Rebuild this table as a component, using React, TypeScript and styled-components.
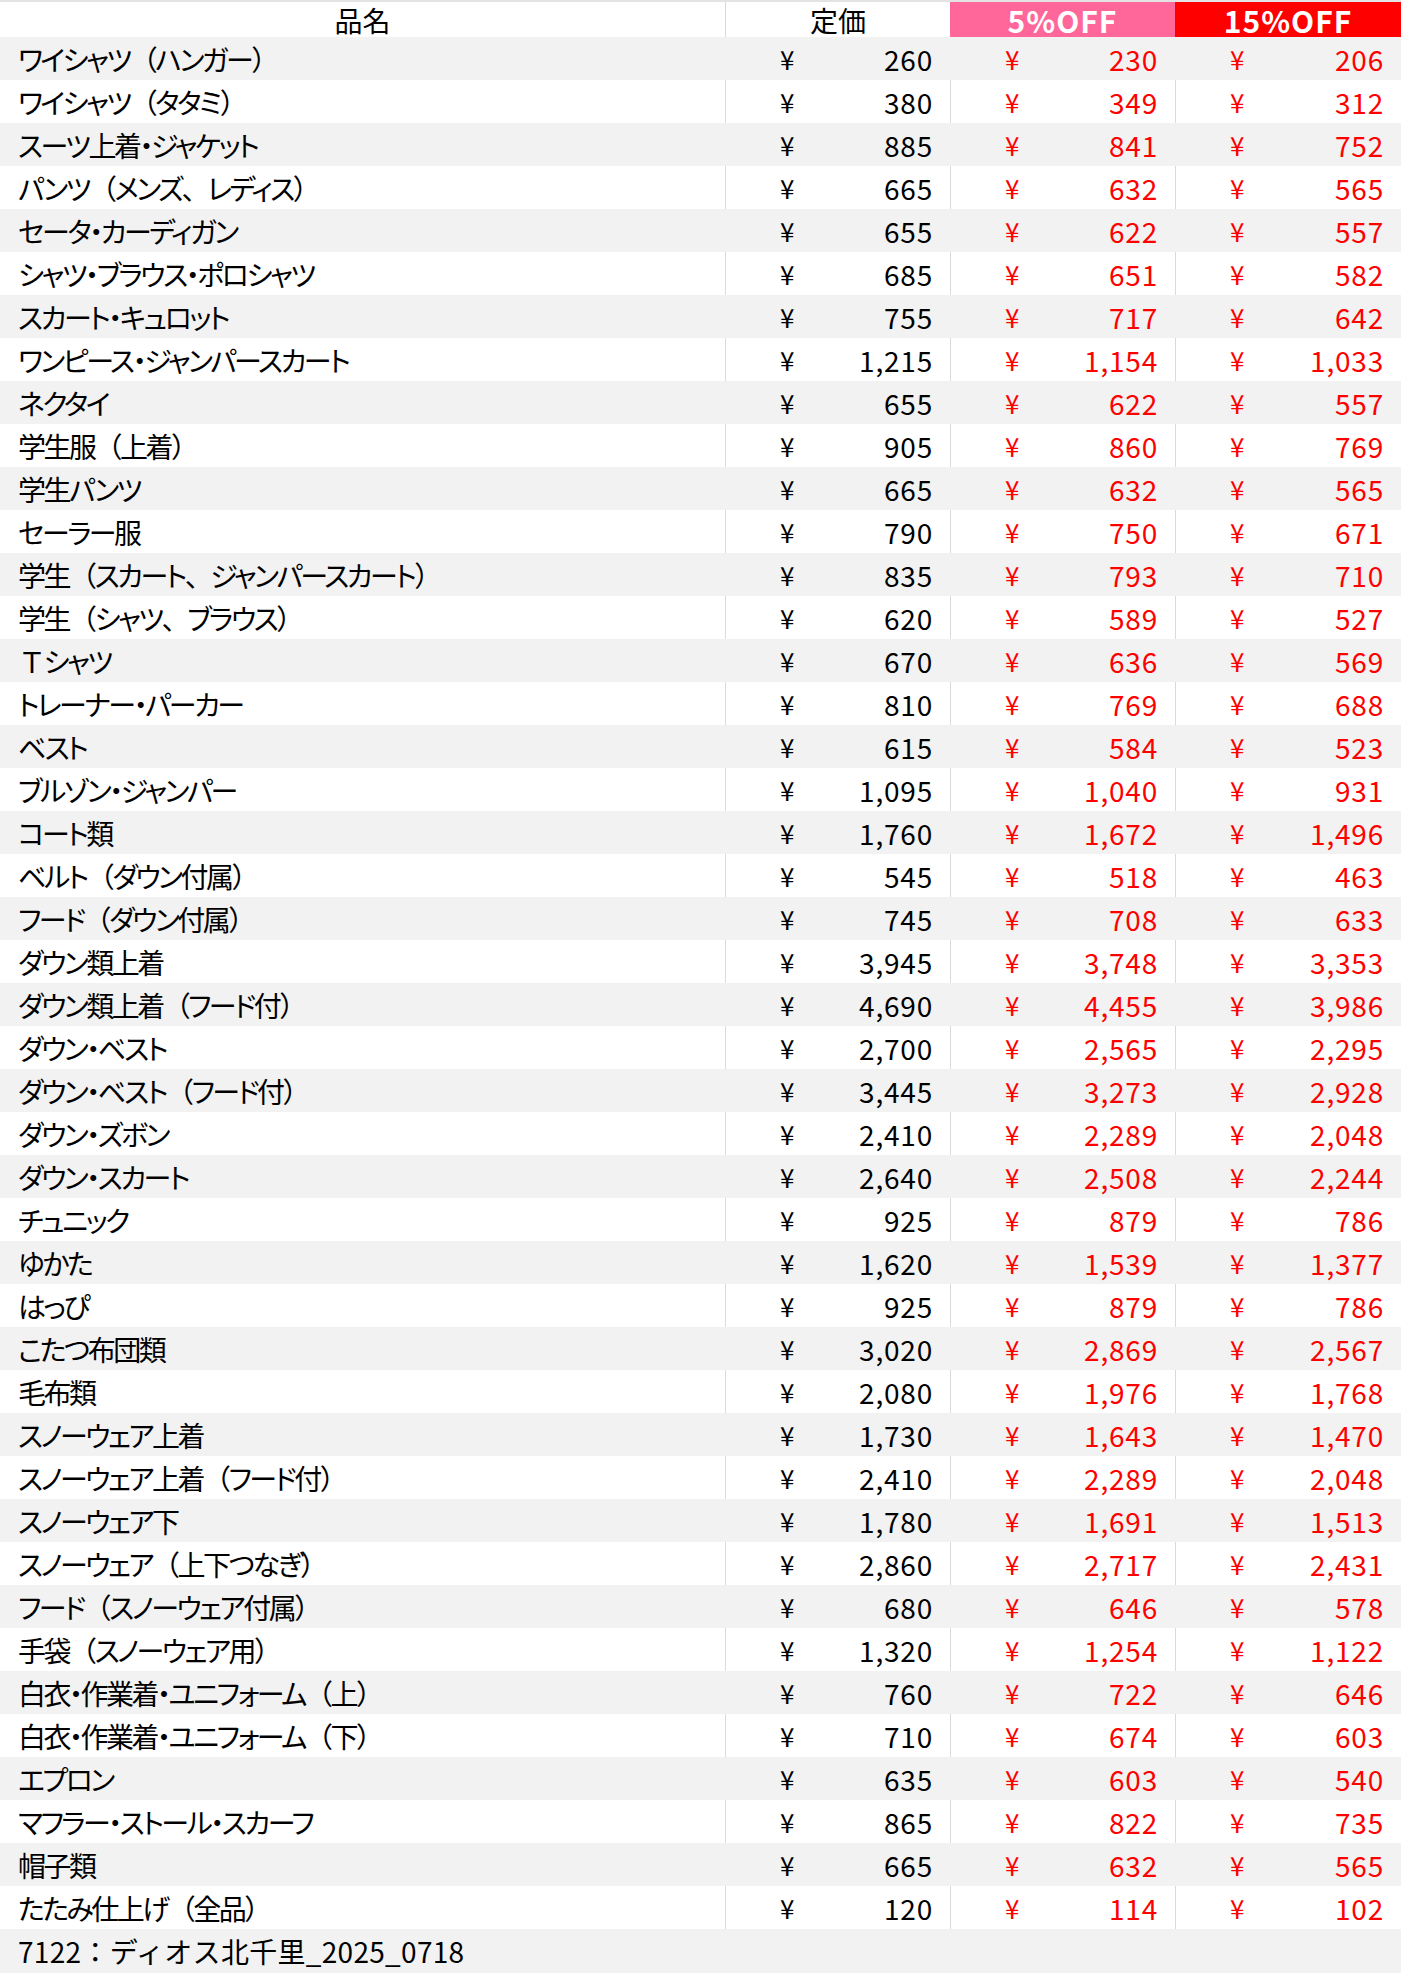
import styled, { createGlobalStyle } from 'styled-components';

const GlobalStyle = createGlobalStyle`
  html, body {
    margin: 0;
    padding: 0;
    background: #ffffff;
  }
  body {
    font-family: 'Noto Sans CJK JP', 'Noto Sans', sans-serif;
    color: #000000;
  }
`;

const COLUMNS = '725px 225px 225px 226px';

const Sheet = styled.div`
  width: 1401px;
  border-top: 2px solid #e3e3e3;
  box-sizing: border-box;
`;

const HeaderRow = styled.div`
  display: grid;
  grid-template-columns: ${COLUMNS};
  height: 35px;
  background: #ffffff;
`;

const HeaderCell = styled.div<{ $fill?: string; $divider?: boolean }>`
  display: flex;
  align-items: center;
  justify-content: center;
  font-size: ${(p) => (p.$fill ? '30px' : '28px')};
  letter-spacing: ${(p) => (p.$fill ? '1px' : '0')};
  line-height: 1;
  background: ${(p) => p.$fill || 'transparent'};
  color: ${(p) => (p.$fill ? '#ffffff' : '#000000')};
  font-weight: ${(p) => (p.$fill ? 700 : 400)};
  border-left: ${(p) => (p.$divider ? '1px solid #d9d9d9' : 'none')};
  box-sizing: border-box;
`;

const Row = styled.div<{ $striped: boolean }>`
  display: grid;
  grid-template-columns: ${COLUMNS};
  height: 43px;
  background: ${(p) => (p.$striped ? '#f2f2f2' : '#ffffff')};
  --grid-line: ${(p) => (p.$striped ? '#f2f2f2' : '#dadada')};
`;

const NameCell = styled.div`
  display: flex;
  align-items: center;
  padding-left: 18px;
  font-size: 28px;
  line-height: 1;
  font-feature-settings: 'palt';
  letter-spacing: -2.5px;
  white-space: pre;
`;

const FullWidth = styled.span`
  font-feature-settings: normal;
`;

const PriceCell = styled.div<{ $red?: boolean }>`
  display: flex;
  align-items: center;
  justify-content: space-between;
  padding: 0 17px 0 54px;
  font-size: 28px;
  line-height: 1;
  color: ${(p) => (p.$red ? '#ff0000' : '#000000')};
  border-left: 1px solid var(--grid-line);
  box-sizing: border-box;
`;

const Yen = styled.span`
  font-size: 26px;
`;

const Amount = styled.span`
  letter-spacing: 0.8px;
`;

const Footer = styled.div`
  display: flex;
  align-items: center;
  height: 44px;
  padding-left: 18px;
  background: #f2f2f2;
  font-size: 28px;
  line-height: 1;
  letter-spacing: 0.3px;
`;

// 品名, 定価, 5%OFF, 15%OFF
const items: [string, number, number, number][] = [
  ['ワイシャツ（ハンガー）', 260, 230, 206],
  ['ワイシャツ（タタミ）', 380, 349, 312],
  ['スーツ上着・ジャケット', 885, 841, 752],
  ['パンツ（メンズ、レディス）', 665, 632, 565],
  ['セータ・カーディガン', 655, 622, 557],
  ['シャツ・ブラウス・ポロシャツ', 685, 651, 582],
  ['スカート・キュロット', 755, 717, 642],
  ['ワンピース・ジャンパースカート', 1215, 1154, 1033],
  ['ネクタイ', 655, 622, 557],
  ['学生服（上着）', 905, 860, 769],
  ['学生パンツ', 665, 632, 565],
  ['セーラー服', 790, 750, 671],
  ['学生（スカート、ジャンパースカート）', 835, 793, 710],
  ['学生（シャツ、ブラウス）', 620, 589, 527],
  ['Ｔシャツ', 670, 636, 569],
  ['トレーナー・パーカー', 810, 769, 688],
  ['ベスト', 615, 584, 523],
  ['ブルゾン・ジャンパー', 1095, 1040, 931],
  ['コート類', 1760, 1672, 1496],
  ['ベルト（ダウン付属）', 545, 518, 463],
  ['フード（ダウン付属）', 745, 708, 633],
  ['ダウン類上着', 3945, 3748, 3353],
  ['ダウン類上着（フード付）', 4690, 4455, 3986],
  ['ダウン・ベスト', 2700, 2565, 2295],
  ['ダウン・ベスト（フード付）', 3445, 3273, 2928],
  ['ダウン・ズボン', 2410, 2289, 2048],
  ['ダウン・スカート', 2640, 2508, 2244],
  ['チュニック', 925, 879, 786],
  ['ゆかた', 1620, 1539, 1377],
  ['はっぴ', 925, 879, 786],
  ['こたつ布団類', 3020, 2869, 2567],
  ['毛布類', 2080, 1976, 1768],
  ['スノーウェア上着', 1730, 1643, 1470],
  ['スノーウェア上着（フード付）', 2410, 2289, 2048],
  ['スノーウェア下', 1780, 1691, 1513],
  ['スノーウェア（上下つなぎ）', 2860, 2717, 2431],
  ['フード（スノーウェア付属）', 680, 646, 578],
  ['手袋（スノーウェア用）', 1320, 1254, 1122],
  ['白衣・作業着・ユニフォーム（上）', 760, 722, 646],
  ['白衣・作業着・ユニフォーム（下）', 710, 674, 603],
  ['エプロン', 635, 603, 540],
  ['マフラー・ストール・スカーフ', 865, 822, 735],
  ['帽子類', 665, 632, 565],
  ['たたみ仕上げ（全品）', 120, 114, 102],
];

const fmt = (n: number) => n.toLocaleString('en-US');

// brackets, commas and full-width latin keep their full width
const WIDE = /([（）、Ｔ])/;

function Name({ text }: { text: string }) {
  const parts = text.split(WIDE).filter(Boolean);
  return (
    <NameCell>
      {parts.map((part, i) =>
        WIDE.test(part) ? <FullWidth key={i}>{part}</FullWidth> : <span key={i}>{part}</span>
      )}
    </NameCell>
  );
}

function Price({ value, red }: { value: number; red?: boolean }) {
  return (
    <PriceCell $red={red}>
      <Yen>¥</Yen>
      <Amount>{fmt(value)}</Amount>
    </PriceCell>
  );
}

export default function App() {
  return (
    <>
      <GlobalStyle />
      <Sheet>
        <HeaderRow>
          <HeaderCell>品名</HeaderCell>
          <HeaderCell $divider>定価</HeaderCell>
          <HeaderCell $fill="#ff6699">5%OFF</HeaderCell>
          <HeaderCell $fill="#ff0000">15%OFF</HeaderCell>
        </HeaderRow>
        {items.map(([name, price, off5, off15], i) => (
          <Row key={name} $striped={i % 2 === 0}>
            <Name text={name} />
            <Price value={price} />
            <Price value={off5} red />
            <Price value={off15} red />
          </Row>
        ))}
        <Footer>7122：ディオス北千里_2025_0718</Footer>
      </Sheet>
    </>
  );
}
